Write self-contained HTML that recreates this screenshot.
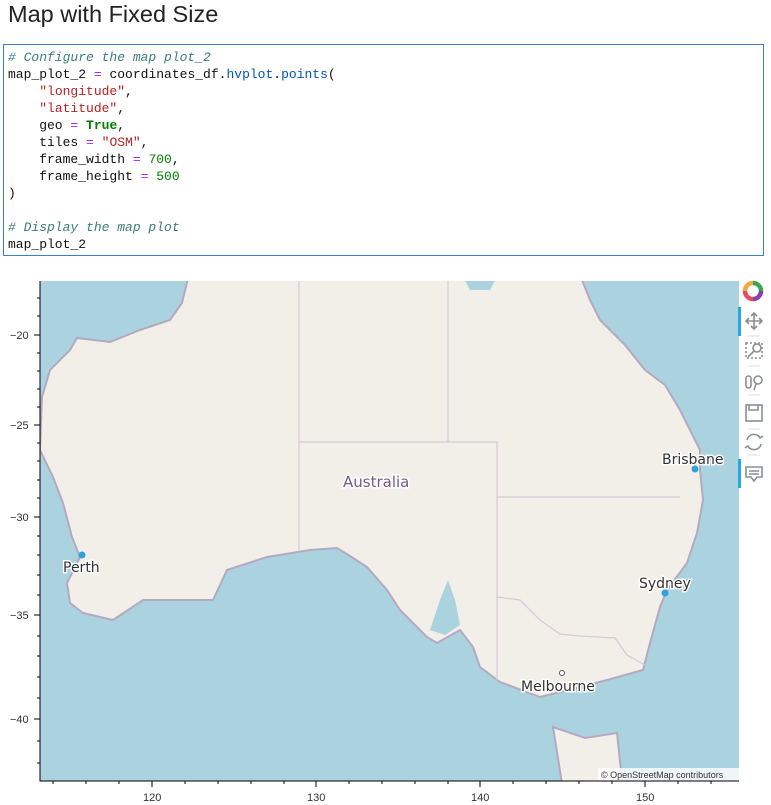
<!DOCTYPE html>
<html><head><meta charset="utf-8"><style>
body{margin:0;background:#fff;width:771px;height:805px;overflow:hidden;font-family:"Liberation Sans",sans-serif;}
h1{position:absolute;left:8px;top:1px;margin:0;font-size:23.5px;font-weight:500;color:#222;}
pre{position:absolute;left:3px;top:44px;width:755px;height:206px;margin:0;border:1px solid #3a7fc8;padding:4px 0 0 4px;font-family:"Liberation Mono",monospace;font-size:13px;line-height:17px;color:#111;}
.c{color:#3d7d7d;font-style:italic}.s{color:#ba2121}.o{color:#aa22ff}.k{color:#008000;font-weight:bold}.n{color:#008000}.f{color:#0055bb}
</style></head><body>
<h1>Map with Fixed Size</h1>
<pre><span class="c"># Configure the map plot_2</span>
map_plot_2 <span class="o">=</span> coordinates_df.<span class="f">hvplot</span>.<span class="f">points</span>(
    <span class="s">"longitude"</span>,
    <span class="s">"latitude"</span>,
    geo <span class="o">=</span> <span class="k">True</span>,
    tiles <span class="o">=</span> <span class="s">"OSM"</span>,
    frame_width <span class="o">=</span> <span class="n">700</span>,
    frame_height <span class="o">=</span> <span class="n">500</span>
)

<span class="c"># Display the map plot</span>
map_plot_2</pre>
<svg width="771" height="805" style="position:absolute;left:0;top:0" xmlns="http://www.w3.org/2000/svg">
<defs><clipPath id="cp"><rect x="40" y="281" width="699" height="500"/></clipPath></defs>
<g clip-path="url(#cp)">
<rect x="40" y="281" width="699" height="500" fill="#aad3df"/>
<path d="M190,270 L578,270 L590,300 L600,320 L625,345 L645,370 L665,385 L680,410 L690,430 L700,450 L700,470 L703,500 L697,533 L687,563 L667,590 L660,607 L650,643 L643,670 L607,680 L580,687 L540,697 L500,682 L480,667 L473,647 L460,630 L437,643 L427,637 L400,610 L387,590 L367,567 L350,556 L337,548 L310,550 L267,557 L227,570 L213,600 L187,600 L143,600 L113,620 L83,613 L70,603 L67,583 L80,557 L72,537 L63,503 L53,477 L40,450 L42,397 L50,370 L70,350 L77,338 L110,342 L140,330 L170,320 L182,303 Z" fill="#f2efe9" stroke="#b5a9c2" stroke-width="2"/>
<path d="M430,630 L440,600 L448,580 L455,600 L460,625 L445,635 Z" fill="#aad3df"/>
<path d="M553,727 L585,738 L617,733 L623,790 L563,790 Z" fill="#f2efe9" stroke="#b5a9c2" stroke-width="2"/>
<path d="M465,281 L495,281 L490,290 L470,290 Z" fill="#aad3df"/>
<g fill="none" stroke="#d8c8d6" stroke-width="1.2">
<path d="M299,281 V550 M448,281 V442 M299,442 H497 V680 M497,497 H680 M497,597 L520,600 L540,620 L560,634 L580,636 L615,638 L627,655 L645,665"/>
</g>
<circle cx="82" cy="555" r="3.5" fill="#30a2da"/>
<circle cx="695" cy="469" r="3.5" fill="#30a2da"/>
<circle cx="665" cy="593" r="3.5" fill="#30a2da"/>
<circle cx="562" cy="673" r="2.5" fill="#fff" stroke="#555"/>
<g font-family="DejaVu Sans,sans-serif" fill="#333" stroke="#fff" stroke-width="3" paint-order="stroke" font-size="14">
<text x="63" y="572">Perth</text><text x="662" y="464">Brisbane</text><text x="639" y="588">Sydney</text><text x="521" y="691">Melbourne</text>
<text x="343" y="487" fill="#7a5a80" font-size="15">Australia</text>
</g>
<rect x="598" y="768" width="141" height="13" fill="#fff" opacity="0.8"/>
<text x="601" y="778" font-size="9" fill="#333">© OpenStreetMap contributors</text>
</g>
<g stroke="#000" stroke-width="1" fill="none">
<path d="M40,281 V781 H739"/>
<path d="M40,335 h-6 M40,425 h-6 M40,517 h-6 M40,615 h-6 M40,719 h-6"/>
<path d="M40,298 h-3 M40,316 h-3 M40,353 h-3 M40,371 h-3 M40,389 h-3 M40,407 h-3 M40,443 h-3 M40,461 h-3 M40,480 h-3 M40,498 h-3 M40,536 h-3 M40,555 h-3 M40,575 h-3 M40,595 h-3 M40,636 h-3 M40,656 h-3 M40,677 h-3 M40,698 h-3 M40,741 h-3 M40,763 h-3"/>
<path d="M152,781 v6 M316,781 v6 M480,781 v6 M645,781 v6"/>
<path d="M53,781 v3 M86,781 v3 M119,781 v3 M185,781 v3 M218,781 v3 M251,781 v3 M284,781 v3 M349,781 v3 M382,781 v3 M415,781 v3 M448,781 v3 M513,781 v3 M546,781 v3 M579,781 v3 M612,781 v3 M678,781 v3 M711,781 v3"/>
</g>
<g font-size="11" fill="#333">
<text x="10" y="339">−20</text><text x="10" y="429">−25</text><text x="10" y="521">−30</text><text x="10" y="619">−35</text><text x="10" y="723">−40</text>
<text x="143" y="801">120</text><text x="307" y="801">130</text><text x="471" y="801">140</text><text x="636" y="801">150</text>
</g>
<g transform="translate(753,291)" stroke-width="4.5" fill="none">
<path d="M0,-8 A8,8 0 0 1 8,0" stroke="#3aa655"/>
<path d="M8,0 A8,8 0 0 1 0,8" stroke="#8b3fa8"/>
<path d="M0,8 A8,8 0 0 1 -8,0" stroke="#e84a5f"/>
<path d="M-8,0 A8,8 0 0 1 0,-8" stroke="#f4a742"/>
</g>
<rect x="738" y="307" width="3" height="29" fill="#26aae1"/>
<rect x="738" y="459" width="3" height="29" fill="#26aae1"/>
<g stroke="#8a8f94" stroke-width="1.6" fill="none">
<path d="M754,313 v16 M746,321 h16 M751,316 l3,-3 3,3 M751,326 l3,3 3,-3 M749,318 l-3,3 3,3 M759,318 l3,3 -3,3"/>
<rect x="746" y="343" width="16" height="15" stroke-dasharray="2 2"/><circle cx="757" cy="348" r="4"/><path d="M754,351 l-6,6"/>
<rect x="746" y="376" width="5" height="12" rx="2.5"/><circle cx="758" cy="380" r="4"/><path d="M756,384 l-2,6"/>
<rect x="746" y="405" width="16" height="16"/><path d="M749,405 v5 h9 v-5"/>
<path d="M747,440 a7,7 0 0 1 13,-2 M761,444 a7,7 0 0 1 -13,2 M758,435 l2,3 3,-2 M750,449 l-2,-3 -3,2"/>
<path d="M746,467 h16 v10 h-5 l-3,4 -3,-4 h-5 Z M749,471 h10 M749,474 h10"/>
</g>
<g stroke="#ddd"><path d="M748,336 h12 M748,366 h12 M748,395 h12 M748,429 h12 M748,455 h12"/></g>
</svg>
</body></html>
